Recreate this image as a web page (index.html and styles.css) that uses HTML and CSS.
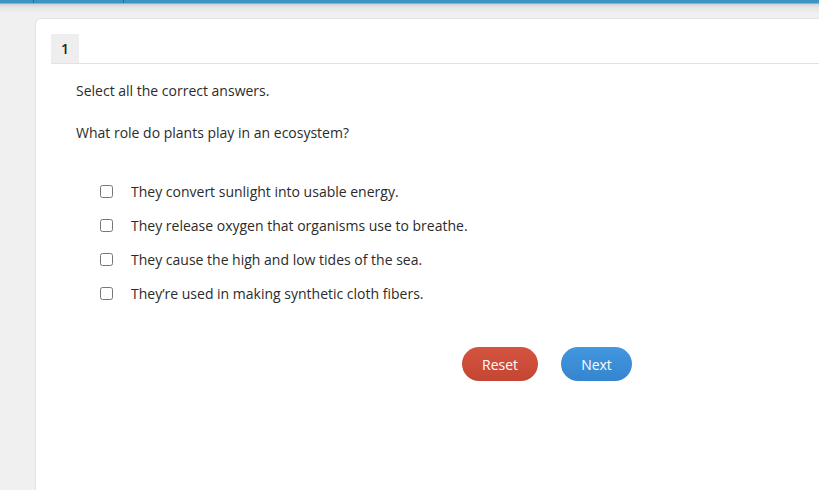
FILE: index.html
```html
<!DOCTYPE html>
<html lang="en">
<head>
<meta charset="utf-8">
<title>Question 1</title>
<link rel="stylesheet" href="styles.css">
</head>
<body>
<header class="topbar">
  <span class="topbar-sep sep-a"></span>
  <span class="topbar-sep sep-b"></span>
</header>
<main class="card">
  <div class="tabs">
    <div class="tab">1</div>
  </div>
  <section class="question">
    <p class="instruction">Select all the correct answers.</p>
    <p class="prompt">What role do plants play in an ecosystem?</p>
    <ul class="options">
      <li class="option"><label><input type="checkbox"><span>They convert sunlight into usable energy.</span></label></li>
      <li class="option"><label><input type="checkbox"><span>They release oxygen that organisms use to breathe.</span></label></li>
      <li class="option"><label><input type="checkbox"><span>They cause the high and low tides of the sea.</span></label></li>
      <li class="option"><label><input type="checkbox"><span>They’re used in making synthetic cloth fibers.</span></label></li>
    </ul>
    <div class="actions">
      <button class="btn btn-reset" type="button">Reset</button>
      <button class="btn btn-next" type="button">Next</button>
    </div>
  </section>
</main>
</body>
</html>
```

FILE: styles.css
```css
* { box-sizing: border-box; }
html, body { margin: 0; padding: 0; }
body {
  background: #f0f0f0;
  font-family: "Open Sans", "Liberation Sans", sans-serif;
  font-size: 14px;
  color: #2b2b2b;
  width: 819px;
  height: 490px;
  overflow: hidden;
}
.topbar {
  position: relative;
  height: 18px;
  background: linear-gradient(to bottom, #3d93c4 0, #3d93c4 3px, #c9d3d8 4px, #e2e4e5 7px, #eeeeee 12px, #f0f0f0 16px);
}
.topbar-sep {
  position: absolute;
  top: 0;
  width: 1px;
  height: 3px;
  background: #1f6f9c;
}
.sep-a { left: 33px; }
.sep-b { left: 123px; }
.card {
  margin-left: 35px;
  width: 800px;
  height: 480px;
  background: #ffffff;
  border: 1px solid #e2e2e2;
  border-top-left-radius: 6px;
  padding: 15px 0 0 15px;
}
.tabs {
  display: flex;
  border-bottom: 1px solid #e2e2e2;
}
.tab {
  width: 28px;
  height: 29px;
  background: #eeeeee;
  display: flex;
  align-items: center;
  justify-content: center;
  font-weight: 600;
  color: #222;
}
.question {
  padding: 17px 0 0 25px;
}
.instruction, .prompt {
  margin: 0;
  line-height: 19px;
}
.prompt {
  margin-top: 23px;
}
.options {
  list-style: none;
  margin: 32px 0 0 0;
  padding: 0 0 0 24px;
}
.option {
  height: 34px;
  display: flex;
  align-items: center;
}
.option label {
  display: flex;
  align-items: center;
}
.option input {
  margin: 0 18px 0 0;
  width: 13px;
  height: 13px;
}
.actions {
  display: flex;
  gap: 23px;
  padding-left: 386px;
  margin-top: 37px;
}
.btn {
  height: 34px;
  border: none;
  border-radius: 17px;
  color: #ffffff;
  font-family: "Open Sans", "Liberation Sans", sans-serif;
  font-size: 14px;
  padding: 0;
}
.btn-reset {
  width: 76px;
  background: linear-gradient(to bottom, #d3553f, #c44533);
}
.btn-next {
  width: 71px;
  background: linear-gradient(to bottom, #4297de, #3585cf);
}
```
